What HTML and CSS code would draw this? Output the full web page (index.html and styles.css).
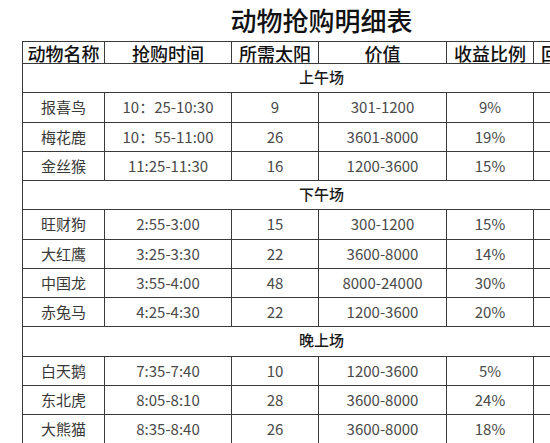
FILE: index.html
```html
<!DOCTYPE html>
<html lang="zh-CN">
<head>
<meta charset="utf-8">
<title>动物抢购明细表</title>
<link rel="stylesheet" href="styles.css">
</head>
<body>
<div class="page">
  <h1 class="title">动物抢购明细表</h1>
  <table class="sheet">
    <colgroup>
      <col class="c1"><col class="c2"><col class="c3"><col class="c4"><col class="c5"><col class="c6">
    </colgroup>
    <thead>
      <tr class="head">
        <th>动物名称</th><th>抢购时间</th><th>所需太阳</th><th>价值</th><th>收益比例</th><th>回报周期</th>
      </tr>
    </thead>
    <tbody>
      <tr class="section"><td colspan="6">上午场</td></tr>
      <tr><td class="name">报喜鸟</td><td class="num">10：25-10:30</td><td class="num">9</td><td class="num">301-1200</td><td class="num">9%</td><td></td></tr>
      <tr><td class="name">梅花鹿</td><td class="num">10：55-11:00</td><td class="num">26</td><td class="num">3601-8000</td><td class="num">19%</td><td></td></tr>
      <tr><td class="name">金丝猴</td><td class="num">11:25-11:30</td><td class="num">16</td><td class="num">1200-3600</td><td class="num">15%</td><td></td></tr>
      <tr class="section"><td colspan="6">下午场</td></tr>
      <tr><td class="name">旺财狗</td><td class="num">2:55-3:00</td><td class="num">15</td><td class="num">300-1200</td><td class="num">15%</td><td></td></tr>
      <tr><td class="name">大红鹰</td><td class="num">3:25-3:30</td><td class="num">22</td><td class="num">3600-8000</td><td class="num">14%</td><td></td></tr>
      <tr><td class="name">中国龙</td><td class="num">3:55-4:00</td><td class="num">48</td><td class="num">8000-24000</td><td class="num">30%</td><td></td></tr>
      <tr><td class="name">赤兔马</td><td class="num">4:25-4:30</td><td class="num">22</td><td class="num">1200-3600</td><td class="num">20%</td><td></td></tr>
      <tr class="section"><td colspan="6">晚上场</td></tr>
      <tr><td class="name">白天鹅</td><td class="num">7:35-7:40</td><td class="num">10</td><td class="num">1200-3600</td><td class="num">5%</td><td></td></tr>
      <tr><td class="name">东北虎</td><td class="num">8:05-8:10</td><td class="num">28</td><td class="num">3600-8000</td><td class="num">24%</td><td></td></tr>
      <tr><td class="name">大熊猫</td><td class="num">8:35-8:40</td><td class="num">26</td><td class="num">3600-8000</td><td class="num">18%</td><td></td></tr>
    </tbody>
  </table>
</div>
</body>
</html>
```
FILE: styles.css
```css
html, body {
  margin: 0;
  padding: 0;
  background: #ffffff;
  overflow: hidden;
}
body {
  width: 550px;
  height: 443px;
  font-family: "Noto Sans CJK SC", "Noto Sans", sans-serif;
  color: #333333;
}
.page {
  width: 640px;
  padding-left: 22px;
}
.title {
  margin: 0;
  width: 599px;
  height: 41px;
  line-height: 40px;
  font-size: 26px;
  font-weight: 500;
  color: #111111;
  text-align: center;
}
.sheet {
  border-collapse: collapse;
  table-layout: fixed;
  width: 599px;
}
.c1 { width: 82px; }
.c2 { width: 127px; }
.c3 { width: 87px; }
.c4 { width: 128px; }
.c5 { width: 87px; }
.c6 { width: 87px; }
.sheet th,
.sheet td {
  border: 1px solid #3a3a3a;
  padding: 0;
  text-align: center;
  vertical-align: middle;
  white-space: nowrap;
}
.head th {
  height: 21px;
  font-size: 18px;
  line-height: 18px;
  font-weight: 500;
  color: #111111;
}
.sheet tbody tr {
  height: 29.25px;
}
.sheet td {
  font-size: 15px;
  line-height: 20px;
  color: #383838;
}
.section td {
  font-size: 15px;
  font-weight: 500;
  color: #1a1a1a;
  padding-bottom: 2px;
}
.num {
  font-size: 14px;
}
.sheet td.num {
  color: #4a4a4a;
}
```
